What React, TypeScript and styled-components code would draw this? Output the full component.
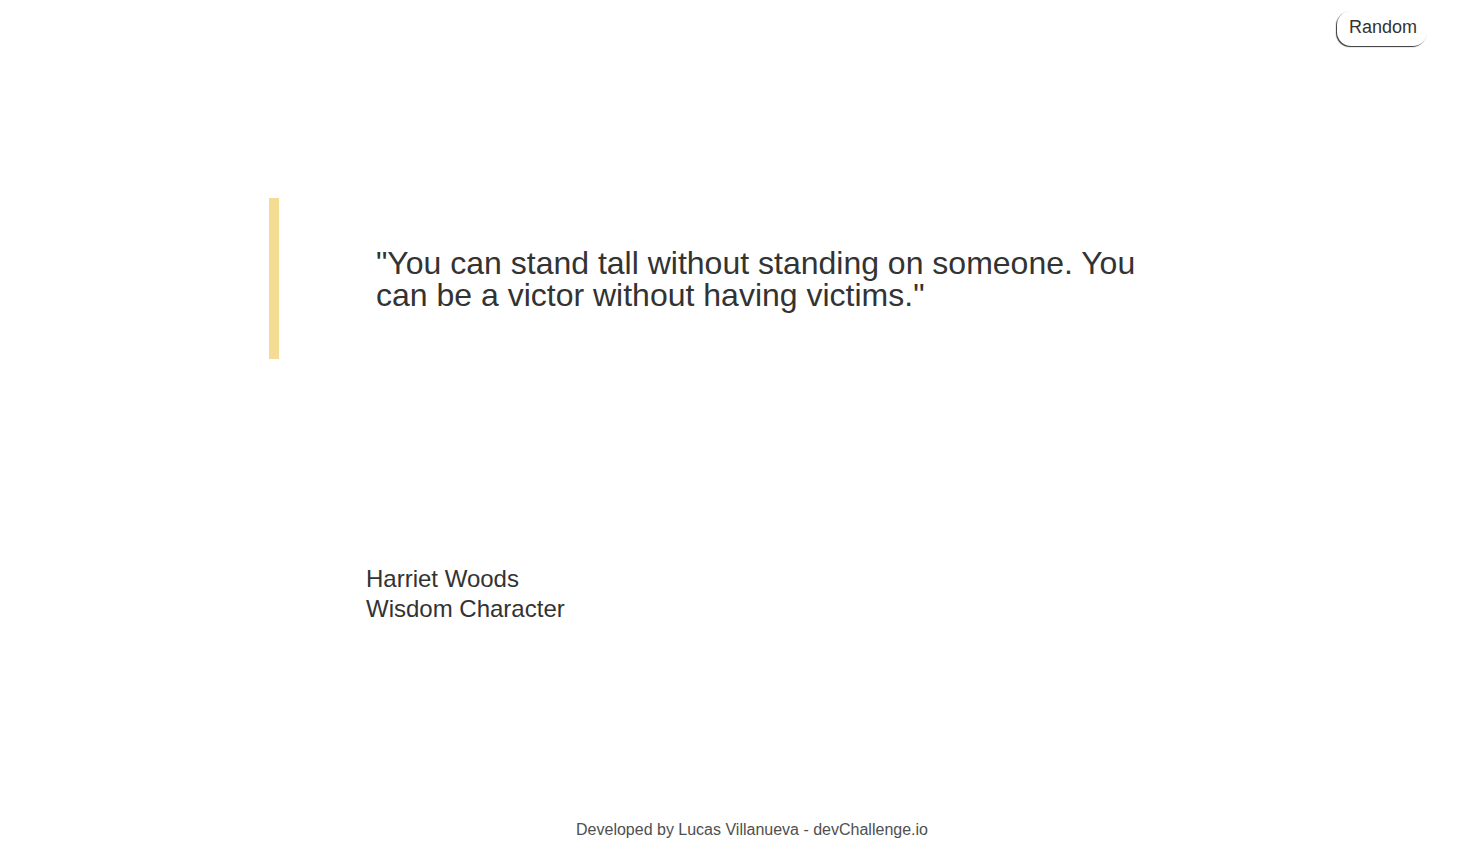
import React from "react";
import styled, { createGlobalStyle } from "styled-components";

const Global = createGlobalStyle`
  html, body { margin: 0; padding: 0; background: #ffffff; }
  body { font-family: Arial, "Liberation Sans", Helvetica, sans-serif; color: #333333; }
`;

const Page = styled.div`
  width: 1476px;
  height: 850px;
  display: flex;
  flex-direction: column;
  box-sizing: border-box;
`;

const Header = styled.header`
  display: flex;
  justify-content: flex-end;
  padding: 11px 49px 0 0;
`;

const RandomButton = styled.button`
  font-family: Arial, "Liberation Sans", sans-serif;
  font-size: 18px;
  color: #333333;
  background: #ffffff;
  border: none;
  border-radius: 14px;
  padding: 6px 10px 9px 12px;
  box-shadow: -1px 1px 1px #333333;
  cursor: pointer;
  line-height: 20px;
`;

const Main = styled.main`
  flex: 1;
  display: flex;
  flex-direction: column;
  padding-top: 152px;
`;

const QuoteBlock = styled.blockquote`
  margin: 0 0 0 269px;
  height: 161px;
  border-left: 10px solid #f4dc94;
  padding: 49px 0 0 97px;
  box-sizing: border-box;
`;

const QuoteText = styled.p`
  margin: 0;
  width: 790px;
  font-size: 32px;
  line-height: 32px;
  color: #333333;
`;

const Author = styled.div`
  margin: 205px 0 0 366px;
  display: flex;
  flex-direction: column;
  font-size: 24px;
  line-height: 30px;
  color: #333333;
`;

const Footer = styled.footer`
  text-align: center;
  font-size: 16px;
  color: #4f4f4f;
  padding: 0 0 11px 28px;
  line-height: 18px;
`;

export default function App() {
  return (
    <Page>
      <Global />
      <Header>
        <RandomButton>Random</RandomButton>
      </Header>
      <Main>
        <QuoteBlock>
          <QuoteText>
            "You can stand tall without standing on someone. You can be a victor without having victims."
          </QuoteText>
        </QuoteBlock>
        <Author>
          <span>Harriet Woods</span>
          <span>Wisdom Character</span>
        </Author>
      </Main>
      <Footer>Developed by Lucas Villanueva - devChallenge.io</Footer>
    </Page>
  );
}
